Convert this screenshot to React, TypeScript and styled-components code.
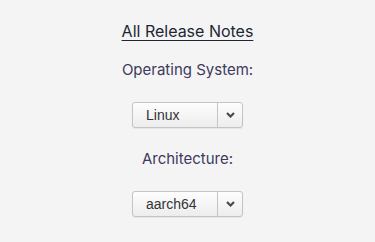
import React from "react";
import styled, { createGlobalStyle } from "styled-components";

const Global = createGlobalStyle`
  html, body { margin: 0; padding: 0; background: #f4f4f5; }
  body { font-family: "Inter", "Noto Sans", sans-serif; }
`;

const Page = styled.div`
  width: 375px;
  height: 242px;
  display: flex;
  flex-direction: column;
  align-items: center;
  padding-top: 20px;
  box-sizing: border-box;
`;

const Title = styled.a`
  font-size: 16px;
  line-height: 22px;
  color: #1d2733;
  text-decoration: underline;
  text-underline-offset: 3px;
  font-weight: 400;
  margin-bottom: 18px;
`;

const Label = styled.div`
  font-size: 15px;
  line-height: 20px;
  color: #3d3a5c;
  margin-bottom: 22px;
`;

const Select = styled.div<{ $gap: number }>`
  display: flex;
  width: 111px;
  height: 26px;
  box-sizing: border-box;
  border: 1px solid #c4c4c4;
  border-radius: 3px;
  background: linear-gradient(#fdfdfd, #ededed);
  box-shadow: 0 1px 1px rgba(0, 0, 0, 0.06);
  margin-bottom: ${(p) => p.$gap}px;
`;

const Value = styled.div`
  flex: 1;
  display: flex;
  align-items: center;
  padding-left: 13px;
  font-family: "Liberation Sans", Arial, sans-serif;
  font-size: 14px;
  color: #333;
  border-right: 1px solid #c4c4c4;
`;

const Arrow = styled.div`
  width: 24px;
  display: flex;
  align-items: center;
  justify-content: center;
`;

const Chevron = () => (
  <svg width="9" height="6" viewBox="0 0 9 6">
    <path d="M1 1 L4.5 4.5 L8 1" fill="none" stroke="#4a4a4a" strokeWidth="2.2" />
  </svg>
);

export default function App() {
  return (
    <Page>
      <Global />
      <Title>All Release Notes</Title>
      <Label>Operating System:</Label>
      <Select $gap={21}>
        <Value>Linux</Value>
        <Arrow><Chevron /></Arrow>
      </Select>
      <Label>Architecture:</Label>
      <Select $gap={0}>
        <Value>aarch64</Value>
        <Arrow><Chevron /></Arrow>
      </Select>
    </Page>
  );
}
